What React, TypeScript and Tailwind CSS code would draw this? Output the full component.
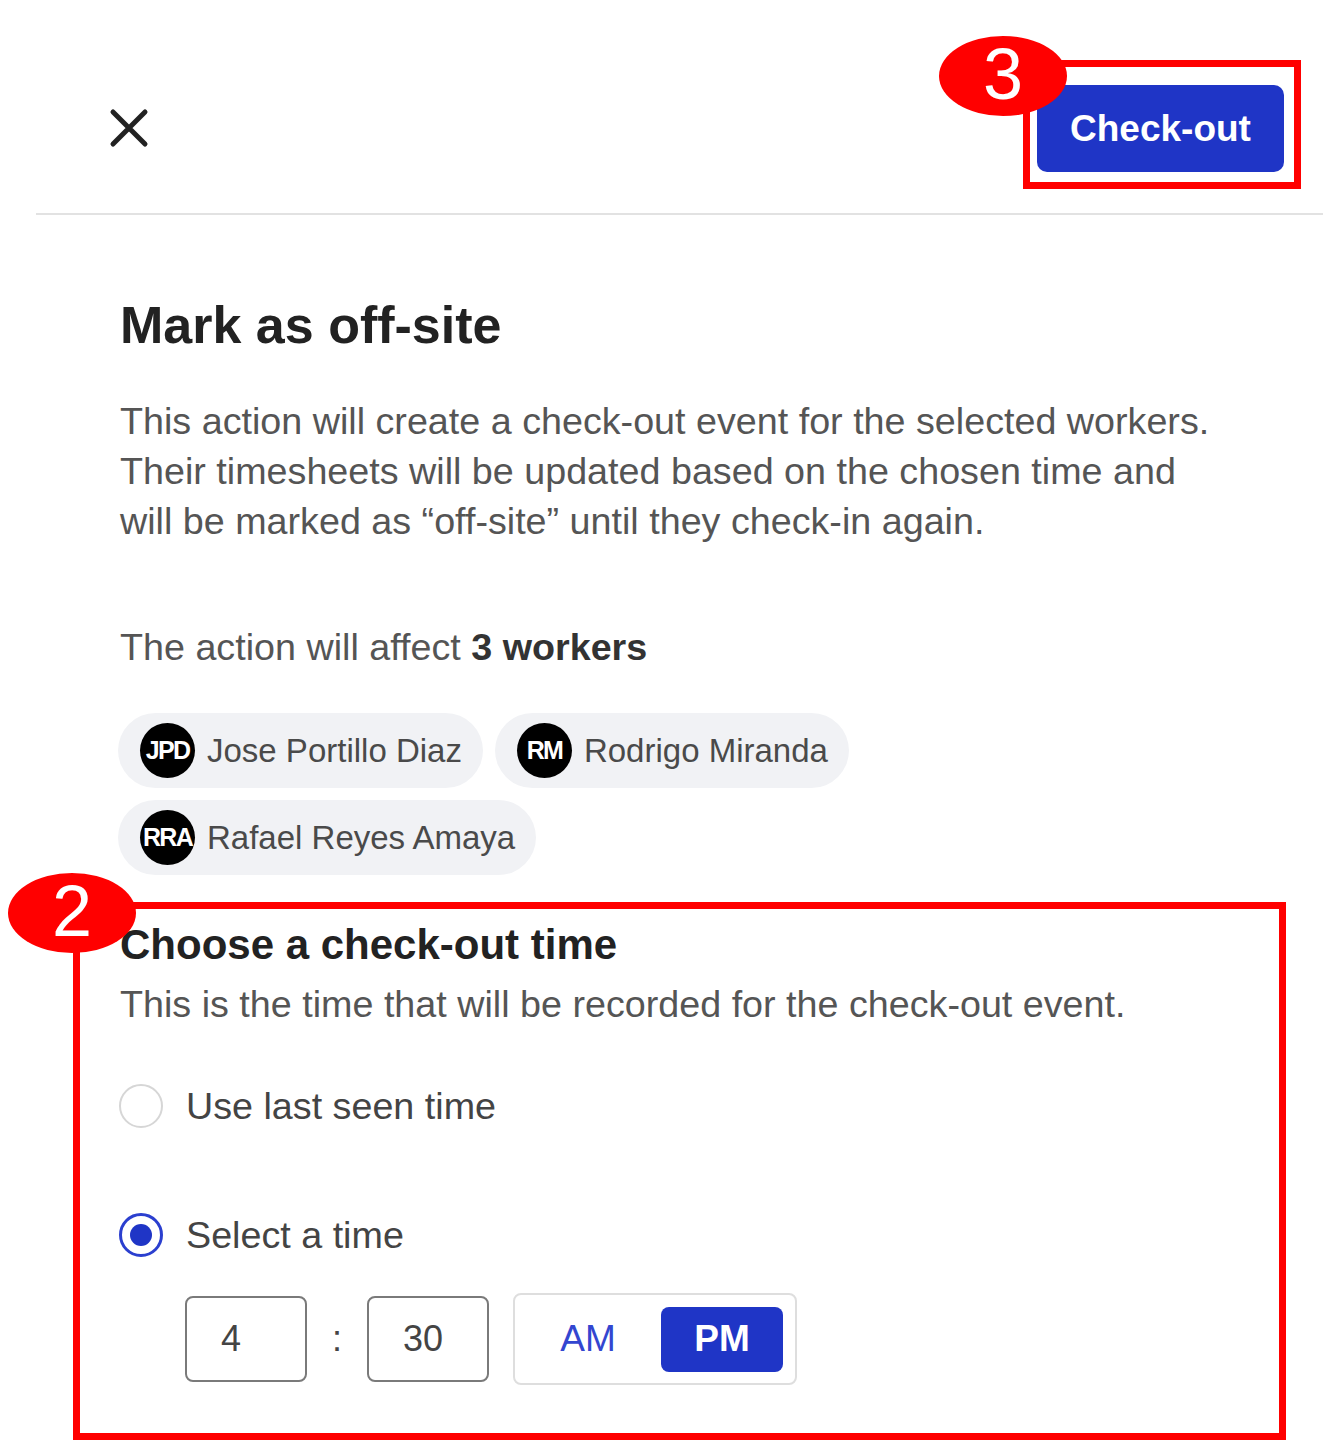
import { useState } from 'react'

type Worker = { initials: string; name: string }

const workers: Worker[] = [
  { initials: 'JPD', name: 'Jose Portillo Diaz' },
  { initials: 'RM', name: 'Rodrigo Miranda' },
  { initials: 'RRA', name: 'Rafael Reyes Amaya' },
]

function CloseIcon() {
  return (
    <svg width="40" height="40" viewBox="0 0 40 40" fill="none">
      <path d="M4 4L36 36M36 4L4 36" stroke="#222" strokeWidth="5" strokeLinecap="round" />
    </svg>
  )
}

function Badge({ label }: { label: string }) {
  return (
    <div className="w-[128px] h-[80px] rounded-[50%] bg-[#ff0000] flex items-center justify-center text-white text-[72px] leading-none font-['Liberation_Sans',sans-serif]">
      <span className="-mt-[4px]">{label}</span>
    </div>
  )
}

function WorkerChip({ worker }: { worker: Worker }) {
  return (
    <div className="flex items-center h-[75px] rounded-full bg-[#f1f2f5] pl-[22px] pr-[21px] gap-[12px]">
      <div className="w-[55px] h-[55px] rounded-full bg-black flex items-center justify-center overflow-visible">
        <span className="text-white font-bold text-[25px] tracking-[-0.07em] whitespace-nowrap">{worker.initials}</span>
      </div>
      <span className="text-[33px] text-[#4a4a4a]">{worker.name}</span>
    </div>
  )
}

function Radio({ checked }: { checked: boolean }) {
  return checked ? (
    <div className="w-[44px] h-[44px] rounded-full border-[3px] border-[#2b3fcf] flex items-center justify-center">
      <div className="w-[22px] h-[22px] rounded-full bg-[#1f35c6]" />
    </div>
  ) : (
    <div className="w-[44px] h-[44px] rounded-full border-2 border-[#d6d6d6]" />
  )
}

export default function App() {
  const [mode, setMode] = useState<'last' | 'select'>('select')
  const [period, setPeriod] = useState<'AM' | 'PM'>('PM')

  return (
    <div className="relative w-[1323px] h-[1442px] bg-white overflow-hidden font-['Liberation_Sans',Arial,sans-serif] text-[#555]">
      {/* header */}
      <div className="ml-[36px] h-[215px] pt-[36px] border-b-2 border-[#e2e2e2] flex items-center justify-between">
        <button className="ml-[73px] mt-[6px]">
          <CloseIcon />
        </button>
        <div className="mr-[22px] border-[7px] border-[#ff0000] pt-[18px] pb-[10px] pl-[7px] pr-[10px]">
          <button className="w-[247px] h-[87px] rounded-[10px] bg-[#1f35c6] text-white font-bold text-[37px]">
            Check-out
          </button>
        </div>
      </div>

      <div className="pl-[120px]">
        <h1 className="mt-[80px] text-[52px] leading-[60px] font-bold text-[#222]">Mark as off-site</h1>
        <p className="mt-[41px] text-[37.7px] leading-[50px]">
          This action will create a check-out event for the selected workers.
          <br />
          Their timesheets will be updated based on the chosen time and
          <br />
          will be marked as “off-site” until they check-in again.
        </p>
        <p className="mt-[76px] text-[37.7px] leading-[50px]">
          The action will affect <span className="font-bold text-[#333]">3 workers</span>
        </p>
        <div className="mt-[41px] -ml-[2px] flex flex-wrap gap-[12px] w-[760px]">
          {workers.map((w) => (
            <WorkerChip key={w.name} worker={w} />
          ))}
        </div>
      </div>

      {/* check-out time */}
      <div className="mt-[27px] ml-[73px] w-[1213px] h-[538px] border-[7px] border-[#ff0000] pl-[40px] pt-[12px]">
        <h2 className="text-[42px] leading-[48px] font-bold text-[#222]">Choose a check-out time</h2>
        <p className="mt-[13px] text-[37.7px] leading-[44px]">
          This is the time that will be recorded for the check-out event.
        </p>
        <button className="mt-[58px] flex items-center gap-[23px] -ml-[1px]" onClick={() => setMode('last')}>
          <Radio checked={mode === 'last'} />
          <span className="text-[37.7px] leading-[44px] text-[#444]">Use last seen time</span>
        </button>
        <button className="mt-[85px] flex items-center gap-[23px] -ml-[1px]" onClick={() => setMode('select')}>
          <Radio checked={mode === 'select'} />
          <span className="text-[37.7px] leading-[44px] text-[#444]">Select a time</span>
        </button>
        <div className="mt-[36px] ml-[65px] flex items-center">
          <div className="w-[122px] h-[86px] rounded-[8px] border-2 border-[#7a7a7a] flex items-center pl-[34px] text-[36px] text-[#444]">
            4
          </div>
          <div className="w-[60px] text-center text-[36px] text-[#444]">:</div>
          <div className="w-[122px] h-[86px] rounded-[8px] border-2 border-[#7a7a7a] flex items-center pl-[34px] text-[36px] text-[#444]">
            30
          </div>
          <div className="ml-[24px] w-[284px] h-[92px] rounded-[8px] border-2 border-[#dedede] flex items-center gap-[12px] p-[12px]">
            <button
              onClick={() => setPeriod('AM')}
              className={`w-[122px] h-[65px] rounded-[8px] text-[37px] ${
                period === 'AM' ? 'bg-[#1f35c6] text-white font-bold' : 'text-[#3346d0]'
              }`}
            >
              AM
            </button>
            <button
              onClick={() => setPeriod('PM')}
              className={`w-[122px] h-[65px] rounded-[8px] text-[37px] ${
                period === 'PM' ? 'bg-[#1f35c6] text-white font-bold' : 'text-[#3346d0]'
              }`}
            >
              PM
            </button>
          </div>
        </div>
      </div>

      {/* annotation badges */}
      <div className="absolute left-[939px] top-[36px]">
        <Badge label="3" />
      </div>
      <div className="absolute left-[8px] top-[873px]">
        <Badge label="2" />
      </div>
    </div>
  )
}
